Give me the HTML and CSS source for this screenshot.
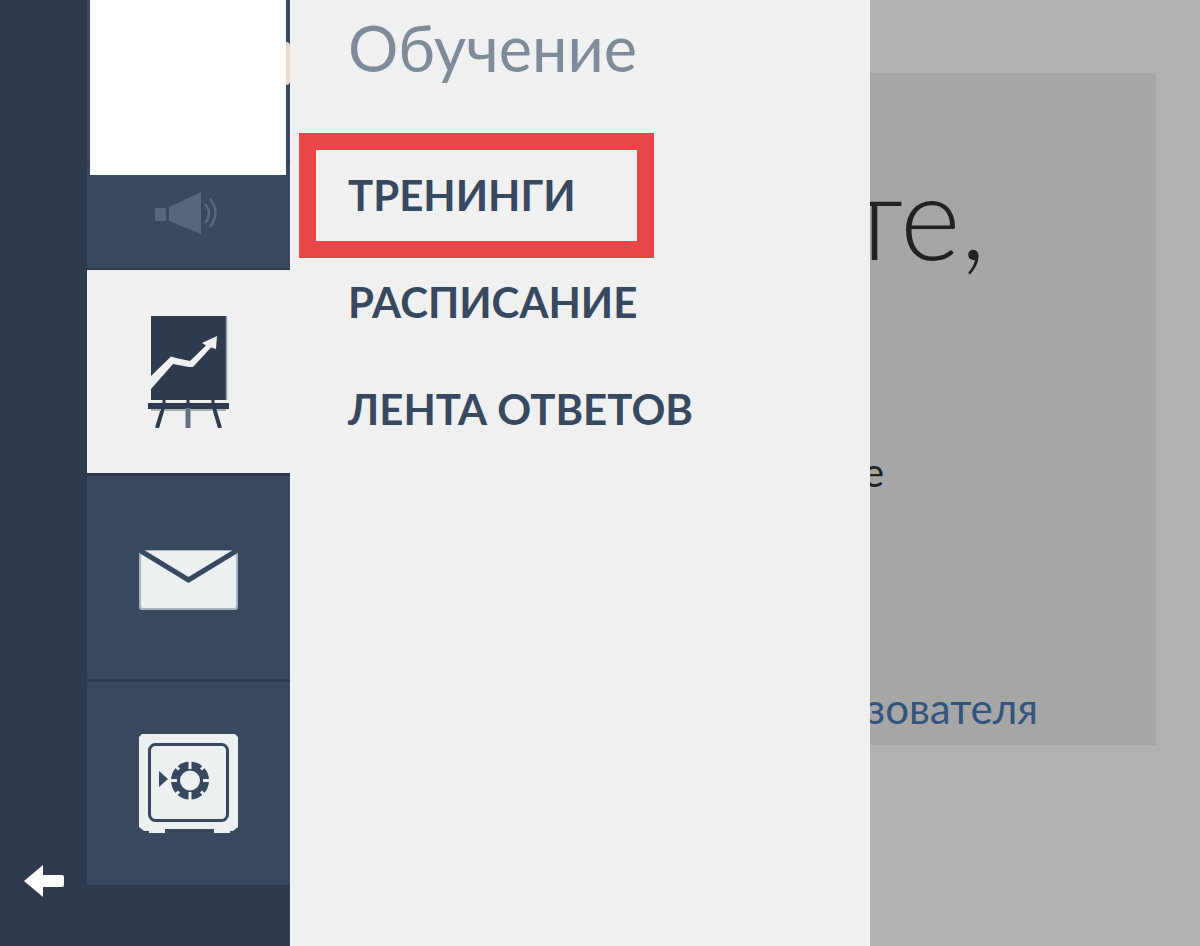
FILE: index.html
```html
<!DOCTYPE html>
<html lang="ru">

<head>
    <meta charset="utf-8">
    <meta name="viewport" content="width=device-width, initial-scale=1">
    <title>Обучение</title>
    <link rel="stylesheet" href="styles.css">
</head>

<body>

    <div class="page">
        <div class="rail">
            <button class="back" aria-label="Назад">
                <svg width="40" height="32" viewBox="0 0 40 32">
                    <path d="M0 16 L19 0 V10 H38 Q40 10 40 12 V20 Q40 22 38 22 H19 V32 Z" fill="#fff" />
                </svg>
            </button>
        </div>

        <nav class="tiles">
            <div class="tile profile">
                <div class="peek"></div>
                <div class="cover"></div>
            </div>
            <a href="#" class="tile news" aria-label="Новости">
                <svg width="62" height="42" viewBox="0 0 62 42">
                    <g fill="#56667e">
                        <rect x="0" y="16" width="11" height="13" />
                        <path d="M14 15 L46 0 V42 L14 29 Z" />
                    </g>
                    <g fill="none" stroke="#56667e" stroke-width="2.5">
                        <path d="M50 12 Q58 21 50 31" />
                        <path d="M55 7 Q66 21 55 35" />
                    </g>
                </svg>
            </a>
            <a href="#" class="tile active" aria-label="Обучение">
                <svg width="82" height="112" viewBox="0 0 82 112">
                    <rect x="3" y="0" width="75" height="84" fill="#2f3b4c" />
                    <path d="M78.500 0 V84" stroke="#9ba1aa" stroke-width="1.500" />
                    <path d="M3 60 L23 40.500 L28 42 L42 45 L58 29.500 L54 27 L69 20 L68 33 L63 31.500 L45 51 L41 51 L25 48 L3 73 Z" fill="#f0f0f0" />
                    <g stroke="#2f3b4c" fill="none">
                        <path d="M0 90 H81" stroke-width="6" />
                        <path d="M16 84 V90 M40 84 V90 M65 84 V90" stroke-width="3" />
                        <path d="M15 92 L9 112 M66 92 L72 112" stroke-width="4" />
                        <path d="M40 92 V112" stroke="#667080" stroke-width="5" />
                    </g>
                    <path d="M3 94 H13 M17 94 H37 M43 94 H64 M69 94 H78" stroke="#a9afb7" stroke-width="2" />
                </svg>
            </a>
            <a href="#" class="tile mail" aria-label="Сообщения">
                <svg width="99" height="60" viewBox="0 0 99 60">
                    <rect width="99" height="60" rx="3" fill="#aab4c2" />
                    <rect x="2" y="1" width="95" height="57" rx="2" fill="#ecf0f1" />
                    <path d="M2 1 L49.500 30 L97 1" fill="none" stroke="#38485e" stroke-width="5" />
                    <path d="M0 0 H5 L0 3 Z M99 0 H94 L99 3 Z" fill="#38485e" />
                </svg>
            </a>
            <a href="#" class="tile" aria-label="Сейф">
                <svg width="99" height="99" viewBox="0 0 99 99">
                    <path d="M3 0 H96 L99 3 V93 L94 97 H91 V99 H75 V95 H26 V99 H10 V97 H5 L0 93 V3 Z" fill="#ecf0f1" />
                    <rect x="10.500" y="10.500" width="78" height="76" rx="6" fill="none" stroke="#38485e" stroke-width="3" />
                    <path d="M20 37 L29 45 L20 53 Z" fill="#38485e" />
                    <circle cx="51" cy="46.500" r="14.500" fill="none" stroke="#38485e" stroke-width="9" />
                    <g stroke="#ecf0f1" stroke-width="3">
                        <path d="M51 27 V35 M51 58 V66 M31.500 46.500 H38 M64 46.500 H70.500" />
                        <path d="M37 32.500 L40 35.500 M65 32.500 L62 35.500 M37 60.500 L40 57.500 M65 60.500 L62 57.500" />
                    </g>
                </svg>
            </a>
        </nav>

        <aside class="panel">
            <h1 class="panel-title">Обучение</h1>
            <ul class="menu">
                <li class="marked"><a href="#">ТРЕНИНГИ</a></li>
                <li><a href="#">РАСПИСАНИЕ</a></li>
                <li><a href="#">ЛЕНТА ОТВЕТОВ</a></li>
            </ul>
        </aside>

        <main class="content">
            <div class="card">
                <h2 class="greeting">те,</h2>
                <p class="note">е</p>
                <a href="#" class="agreement">зователя</a>
            </div>
        </main>
    </div>

</body>

</html>
```

FILE: styles.css
```css
*,
*::before {
    box-sizing: border-box;
}

body {
    margin: 0;
    font-family: Lato, "Open Sans", sans-serif;
    background: #b1b1b1;
}

a {
    text-decoration: none;
}

.page {
    display: flex;
    min-height: 100vh;
    background: #2f3b4c;
}

.rail {
    display: flex;
    flex: 0 0 87px;
    align-items: flex-end;
    justify-content: center;
    padding-bottom: 49px;
}

.back {
    display: block;
    padding: 0;
    background: none;
    border: none;
    cursor: pointer;
}

svg {
    display: block;
}

.tiles {
    flex: 0 0 203px;
}

.tile {
    display: flex;
    align-items: center;
    justify-content: center;
    height: 206px;
    background: #38485e;
    border-bottom: 3px solid #2f3b4c;
}

.profile {
    position: relative;
    height: 163px;
    border-bottom-width: 2px;
}

.cover {
    position: absolute;
    top: 0;
    left: 3px;
    right: 4px;
    height: 175px;
    background: #fff;
}

/* edge of the photo behind the cover */
.peek {
    position: absolute;
    top: 42px;
    right: 0;
    width: 8px;
    height: 43px;
    background: #e6d9d6;
    border-radius: 0 4px 4px 0;
}

.news {
    height: 107px;
    padding: 0 5px 6px 0;
    border-bottom-width: 2px;
}

.mail {
    padding-top: 4px;
}

.active {
    background: #f0f0f0;
}

.panel {
    flex: 0 0 580px;
    background: #f0f0f0;
}

.panel-title {
    margin: 0;
    padding: 12px 58px 0;
    font-size: 63px;
    font-weight: 400;
    line-height: 72px;
    color: #808b9a;
}

.menu {
    margin: 58px 0 0;
    padding: 0;
    list-style: none;
}

.menu li {
    position: relative;
    padding: 0 58px;
    line-height: 107px;
}

.menu a {
    position: relative;
    z-index: 1;
    display: block;
    font-size: 42px;
    font-weight: 700;
    color: #38485e;
}

.marked::before {
    content: "";
    position: absolute;
    top: -9px;
    bottom: -9px;
    left: 9px;
    width: 355px;
    border: 17px solid #e9464a;
}

.content {
    flex: 1;
    min-width: 0;
    padding: 73px 44px 0 0;
    background: #b1b1b1;
}

.card {
    display: flex;
    flex-direction: column;
    align-items: flex-end;
    padding: 78px 0 12px;
    overflow: hidden;
    background: #a6a6a6;
}

.greeting {
    margin: 0;
    padding-right: 170px;
    font-size: 116px;
    font-weight: 300;
    line-height: 130px;
    color: #222;
}

.note {
    margin: 166px 0 0;
    padding-right: 272px;
    font-size: 40px;
    line-height: 50px;
    color: #222;
}

.agreement {
    margin-top: 186px;
    padding-right: 118px;
    font-size: 42px;
    line-height: 50px;
    color: #34547d;
}
```
